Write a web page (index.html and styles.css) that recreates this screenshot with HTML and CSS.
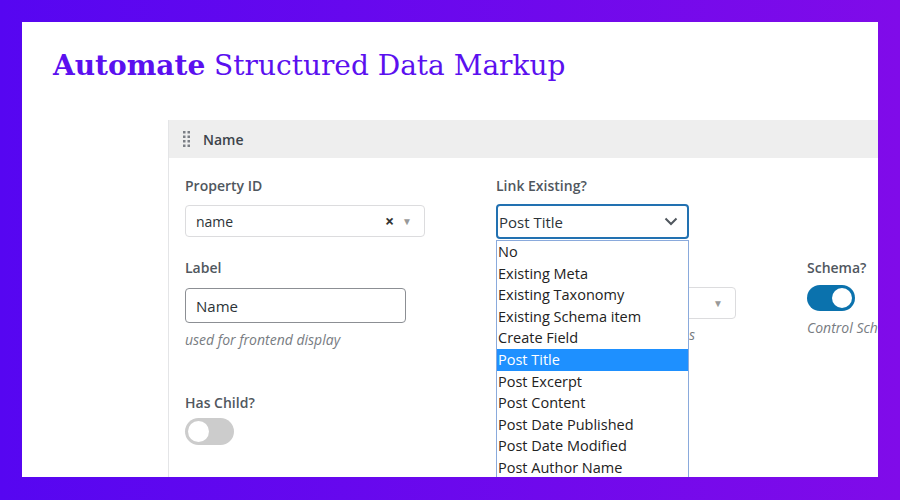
FILE: index.html
```html
<!DOCTYPE html>
<html lang="en">
<head>
    <meta charset="UTF-8">
    <meta name="viewport" content="width=device-width, initial-scale=1.0">
    <title>Automate Structured Data Markup</title>
    <link rel="stylesheet" href="styles.css">
</head>
<body>
    <div class="card">
        <h1 class="title"><strong>Automate</strong> Structured Data Markup</h1>

        <div class="panel">
            <div class="panel-head">
                <svg class="grip" width="8" height="16" viewBox="0 0 8 16">
                    <rect x="0" y="0" width="2.5" height="2.5" />
                    <rect x="4.5" y="0" width="2.5" height="2.5" />
                    <rect x="0" y="4.5" width="2.5" height="2.5" />
                    <rect x="4.5" y="4.5" width="2.5" height="2.5" />
                    <rect x="0" y="9" width="2.5" height="2.5" />
                    <rect x="4.5" y="9" width="2.5" height="2.5" />
                    <rect x="0" y="13.5" width="2.5" height="2.5" />
                    <rect x="4.5" y="13.5" width="2.5" height="2.5" />
                </svg>
                <span>Name</span>
            </div>

            <div class="panel-body">
                <div class="field">
                    <label class="field-label">Property ID</label>
                    <div class="select-box">
                        <span>name</span>
                        <span class="select-icons"><span class="clear">×</span><span class="caret">▼</span></span>
                    </div>
                </div>

                <div class="field field-link">
                    <label class="field-label">Link Existing?</label>
                    <div class="native-select">
                        <span>Post Title</span>
                        <svg width="14" height="9" viewBox="0 0 14 9"><path d="M1.5 1.5 L7 7 L12.5 1.5" fill="none" stroke="#50575e" stroke-width="2" /></svg>
                    </div>
                    <ul class="options">
                        <li>No</li>
                        <li>Existing Meta</li>
                        <li>Existing Taxonomy</li>
                        <li>Existing Schema item</li>
                        <li>Create Field</li>
                        <li class="selected">Post Title</li>
                        <li>Post Excerpt</li>
                        <li>Post Content</li>
                        <li>Post Date Published</li>
                        <li>Post Date Modified</li>
                        <li>Post Author Name</li>
                    </ul>
                </div>

                <div></div>

                <div class="field">
                    <label class="field-label">Label</label>
                    <input class="text-input" type="text" value="Name">
                    <p class="help help-gap">used for frontend display</p>
                </div>

                <div class="field">
                    <label class="field-label">&nbsp;</label>
                    <div class="select-box">
                        <span></span>
                        <span class="select-icons"><span class="caret">▼</span></span>
                    </div>
                    <p class="help help-right">values</p>
                </div>

                <div class="field">
                    <label class="field-label">Schema?</label>
                    <span class="toggle on"></span>
                    <p class="help help-nowrap">Control Schema output</p>
                </div>

                <div class="field">
                    <label class="field-label">Has Child?</label>
                    <span class="toggle"></span>
                </div>
            </div>
        </div>
    </div>
</body>
</html>
```

FILE: styles.css
```css
body{
    margin: 0;
    padding: 22px 22px 23px;
    height: 500px;
    box-sizing: border-box;
    background: linear-gradient(90deg, #5606f1, #800be9);
    font-family: "Open Sans", "Noto Sans", sans-serif;
}

.card{
    background-color: #fff;
    height: 455px;
    overflow: hidden;
}

.title{
    margin: 0;
    padding: 25px 0 0 31px;
    font-family: "DejaVu Serif", serif;
    font-weight: normal;
    font-size: 28px;
    line-height: 38px;
    color: #5b10ef;
}

.title strong{
    font-weight: bold;
}

.panel{
    margin: 35px 0 0 146px;
    width: 900px;
    height: 400px;
    border-left: 1px solid #e4e5e7;
}

.panel-head{
    height: 38px;
    background-color: #eeeeee;
    display: flex;
    align-items: center;
    gap: 12px;
    padding-left: 14px;
    font-size: 14px;
    font-weight: 600;
    color: #3c434a;
}

.grip{
    fill: #7b7f85;
}

.panel-body{
    display: grid;
    grid-template-columns: 240px 240px 240px;
    column-gap: 71px;
    row-gap: 19px;
    padding: 18px 0 0 16px;
}

.field{
    display: flex;
    flex-direction: column;
    align-items: flex-start;
}

.field-label{
    font-size: 14px;
    font-weight: 600;
    line-height: 20px;
    color: #50575e;
    margin-bottom: 9px;
}

.select-box{
    width: 240px;
    height: 32px;
    box-sizing: border-box;
    border: 1px solid #dcdcde;
    border-radius: 4px;
    display: flex;
    align-items: center;
    justify-content: space-between;
    padding: 0 12px 0 10px;
    font-size: 14px;
    color: #2c3338;
}

.select-icons{
    display: flex;
    align-items: center;
    gap: 8px;
}

.clear{
    font-size: 16px;
    font-weight: bold;
    color: #333;
}

.caret{
    font-size: 10px;
    color: #999;
}

.field-link{
    position: relative;
}

.native-select{
    width: 193px;
    height: 35px;
    margin-top: -1px;
    box-sizing: border-box;
    border: 2px solid #2271b1;
    border-radius: 4px;
    display: flex;
    align-items: center;
    justify-content: space-between;
    padding: 0 9px 0 1px;
    font-size: 15px;
    color: #2c3338;
}

.options{
    position: absolute;
    top: 64px;
    left: 0;
    z-index: 2;
    width: 193px;
    height: 260px;
    box-sizing: border-box;
    margin: 0;
    padding: 0;
    list-style: none;
    background-color: #fff;
    border: 1px solid #8aaadc;
    font-size: 14.5px;
    color: #222;
}

.options li{
    height: 21.6px;
    line-height: 21.6px;
    padding-left: 1px;
    white-space: nowrap;
}

.options .selected{
    background-color: #1e90ff;
    color: #fff;
}

.text-input{
    width: 221px;
    height: 35px;
    box-sizing: border-box;
    margin: 1px 0 0;
    border: 1px solid #8c8f94;
    border-radius: 4px;
    padding: 0 10px;
    font-family: inherit;
    font-size: 15px;
    color: #2c3338;
}

.help{
    margin: 7px 0 0;
    font-size: 14px;
    line-height: 20px;
    font-style: italic;
    color: #787c82;
}

.help-gap{
    margin-bottom: 24px;
}

.help-right{
    width: 199px;
    text-align: right;
    margin-top: 6px;
}

.help-nowrap{
    white-space: nowrap;
}

.toggle{
    position: relative;
    display: block;
    width: 49px;
    height: 27px;
    border-radius: 14px;
    background-color: #cccccc;
    margin-top: -4px;
}

.toggle::after{
    content: "";
    position: absolute;
    left: 3px;
    top: 3px;
    width: 21px;
    height: 21px;
    border-radius: 50%;
    background-color: #fff;
}

.toggle.on{
    width: 48px;
    height: 26px;
    background-color: #0b72ad;
    margin-top: -2px;
}

.toggle.on::after{
    left: auto;
    right: 3px;
    width: 20px;
    height: 20px;
}
```
